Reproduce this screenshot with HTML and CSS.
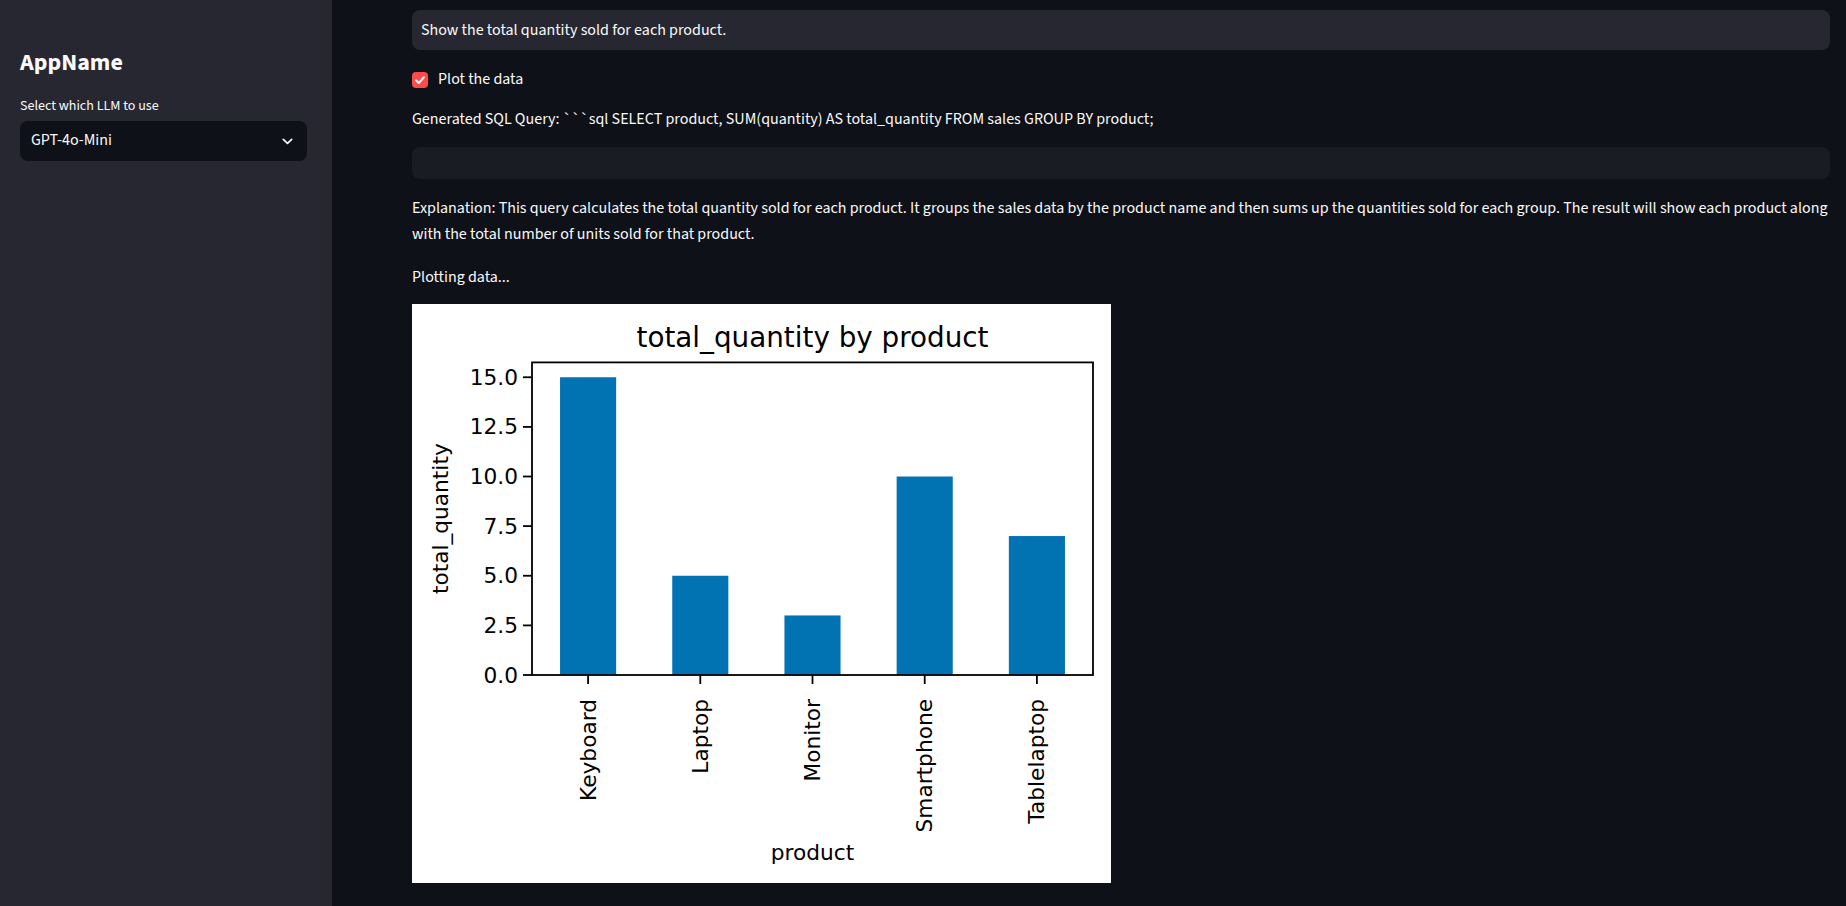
FILE: index.html
```html
<!DOCTYPE html>
<html lang="en">
<head>
<meta charset="utf-8">
<title>AppName</title>
<link rel="stylesheet" href="styles.css">
</head>
<body>
<div class="app">
  <aside class="sidebar">
    <h2 class="app-name">AppName</h2>
    <label class="select-label">Select which LLM to use</label>
    <div class="select">
      <span class="select-value">GPT-4o-Mini</span>
      <svg class="chevron" width="11" height="7" viewBox="0 0 11 7"><path d="M1.3 1.3 L5.5 5.3 L9.7 1.3" fill="none" stroke="#fafafa" stroke-width="1.7" stroke-linecap="round" stroke-linejoin="round"/></svg>
    </div>
  </aside>
  <main class="main">
    <div class="prompt-box">Show the total quantity sold for each product.</div>
    <div class="checkbox-row">
      <span class="checkbox">
        <svg width="16" height="16" viewBox="0 0 16 16"><path d="M4 8.2 L6.8 11 L12 5.2" fill="none" stroke="#fff" stroke-width="2" stroke-linecap="round" stroke-linejoin="round"/></svg>
      </span>
      <span class="checkbox-label">Plot the data</span>
    </div>
    <p class="text sql-line">Generated SQL Query: ```sql SELECT product, SUM(quantity) AS total_quantity FROM sales GROUP BY product;</p>
    <div class="code-block"></div>
    <p class="text explanation">Explanation: This query calculates the total quantity sold for each product. It groups the sales data by the product name and then sums up the quantities sold for each group. The result will show each product along with the total number of units sold for that product.</p>
    <p class="text plotting">Plotting data...</p>
    <div class="chart">
      <svg width="699" height="579" viewBox="0 0 699 579" font-family="DejaVu Sans, sans-serif">
        <rect x="0" y="0" width="699" height="579" fill="#ffffff"/>
        <text x="400.5" y="43" font-size="27.8" text-anchor="middle" fill="#000">total_quantity by product</text>
        <g fill="#0173b2">
          <rect x="148.05" y="73.25" width="56.1" height="297.75"/>
          <rect x="260.25" y="271.75" width="56.1" height="99.25"/>
          <rect x="372.45" y="311.45" width="56.1" height="59.55"/>
          <rect x="484.65" y="172.5" width="56.1" height="198.5"/>
          <rect x="596.85" y="232.05" width="56.1" height="138.95"/>
        </g>
        <rect x="120" y="58.4" width="561" height="312.6" fill="none" stroke="#000" stroke-width="1.8"/>
        <g stroke="#000" stroke-width="1.8">
          <line x1="111" y1="371" x2="120" y2="371"/>
          <line x1="111" y1="321.4" x2="120" y2="321.4"/>
          <line x1="111" y1="271.75" x2="120" y2="271.75"/>
          <line x1="111" y1="222.1" x2="120" y2="222.1"/>
          <line x1="111" y1="172.5" x2="120" y2="172.5"/>
          <line x1="111" y1="122.9" x2="120" y2="122.9"/>
          <line x1="111" y1="73.25" x2="120" y2="73.25"/>
          <line x1="176.1" y1="371" x2="176.1" y2="380"/>
          <line x1="288.3" y1="371" x2="288.3" y2="380"/>
          <line x1="400.5" y1="371" x2="400.5" y2="380"/>
          <line x1="512.7" y1="371" x2="512.7" y2="380"/>
          <line x1="624.9" y1="371" x2="624.9" y2="380"/>
        </g>
        <g font-size="21.7" text-anchor="end" dominant-baseline="central" fill="#000">
          <text x="106" y="371">0.0</text>
          <text x="106" y="321.4">2.5</text>
          <text x="106" y="271.75">5.0</text>
          <text x="106" y="222.1">7.5</text>
          <text x="106" y="172.5">10.0</text>
          <text x="106" y="122.9">12.5</text>
          <text x="106" y="73.25">15.0</text>
        </g>
        <g font-size="21.7" text-anchor="end" dominant-baseline="central" fill="#000">
          <text transform="translate(176.1 395) rotate(-90)">Keyboard</text>
          <text transform="translate(288.3 395) rotate(-90)">Laptop</text>
          <text transform="translate(400.5 395) rotate(-90)">Monitor</text>
          <text transform="translate(512.7 395) rotate(-90)">Smartphone</text>
          <text transform="translate(624.9 395) rotate(-90)">Tablelaptop</text>
        </g>
        <text transform="translate(28 214.7) rotate(-90)" font-size="21.7" text-anchor="middle" dominant-baseline="central" fill="#000">total_quantity</text>
        <text x="400.5" y="556" font-size="21.7" text-anchor="middle" fill="#000">product</text>
      </svg>
    </div>
  </main>
</div>
</body>
</html>
```
FILE: styles.css
```css
* { box-sizing: border-box; }
html, body { margin: 0; padding: 0; }
body {
  background: #0e1117;
  color: #fafafa;
  font-family: "Source Sans Pro", "Source Sans 3", sans-serif;
  font-size: 16px;
  line-height: 1.6;
}
.app {
  display: flex;
  min-height: 906px;
  height: 906px;
  overflow: hidden;
}
.sidebar {
  width: 332px;
  flex: 0 0 332px;
  background: #262730;
  padding: 49px 25px 0 20px;
  display: flex;
  flex-direction: column;
}
.app-name {
  margin: 0;
  font-size: 24px;
  font-weight: 700;
  line-height: 1.2;
}
.select-label {
  margin-top: 17px;
  font-size: 14px;
  line-height: 1.6;
}
.select {
  margin-top: 4px;
  height: 40px;
  background: #0e1117;
  border-radius: 8px;
  display: flex;
  align-items: center;
  justify-content: space-between;
  padding: 0 14px 0 11px;
}
.select-value { font-size: 16px; }
.chevron { display: block; }
.main {
  flex: 1 1 auto;
  padding: 10px 16px 0 80px;
  display: flex;
  flex-direction: column;
  gap: 16px;
  min-width: 0;
}
.prompt-box {
  height: 40px;
  background: #262730;
  border-radius: 8px;
  padding: 1px 10px 0 9px;
  display: flex;
  align-items: center;
}
.checkbox-row {
  display: flex;
  align-items: center;
  height: 25.6px;
  gap: 10px;
  margin-top: 1px;
}
.checkbox {
  width: 16px;
  height: 16px;
  background: #ff4b4b;
  border-radius: 4px;
  display: block;
}
.checkbox svg { display: block; }
.text { margin: 0; }
.sql-line { margin-top: -2px; }
.code-block {
  height: 32px;
  background: #1a1c24;
  border-radius: 8px;
  margin-top: -1px;
}
.explanation { margin-top: 1px; margin-right: -6px; }
.plotting { margin-top: 1.5px; }
.chart { margin-top: -2.5px; }
.chart svg { display: block; }
```
